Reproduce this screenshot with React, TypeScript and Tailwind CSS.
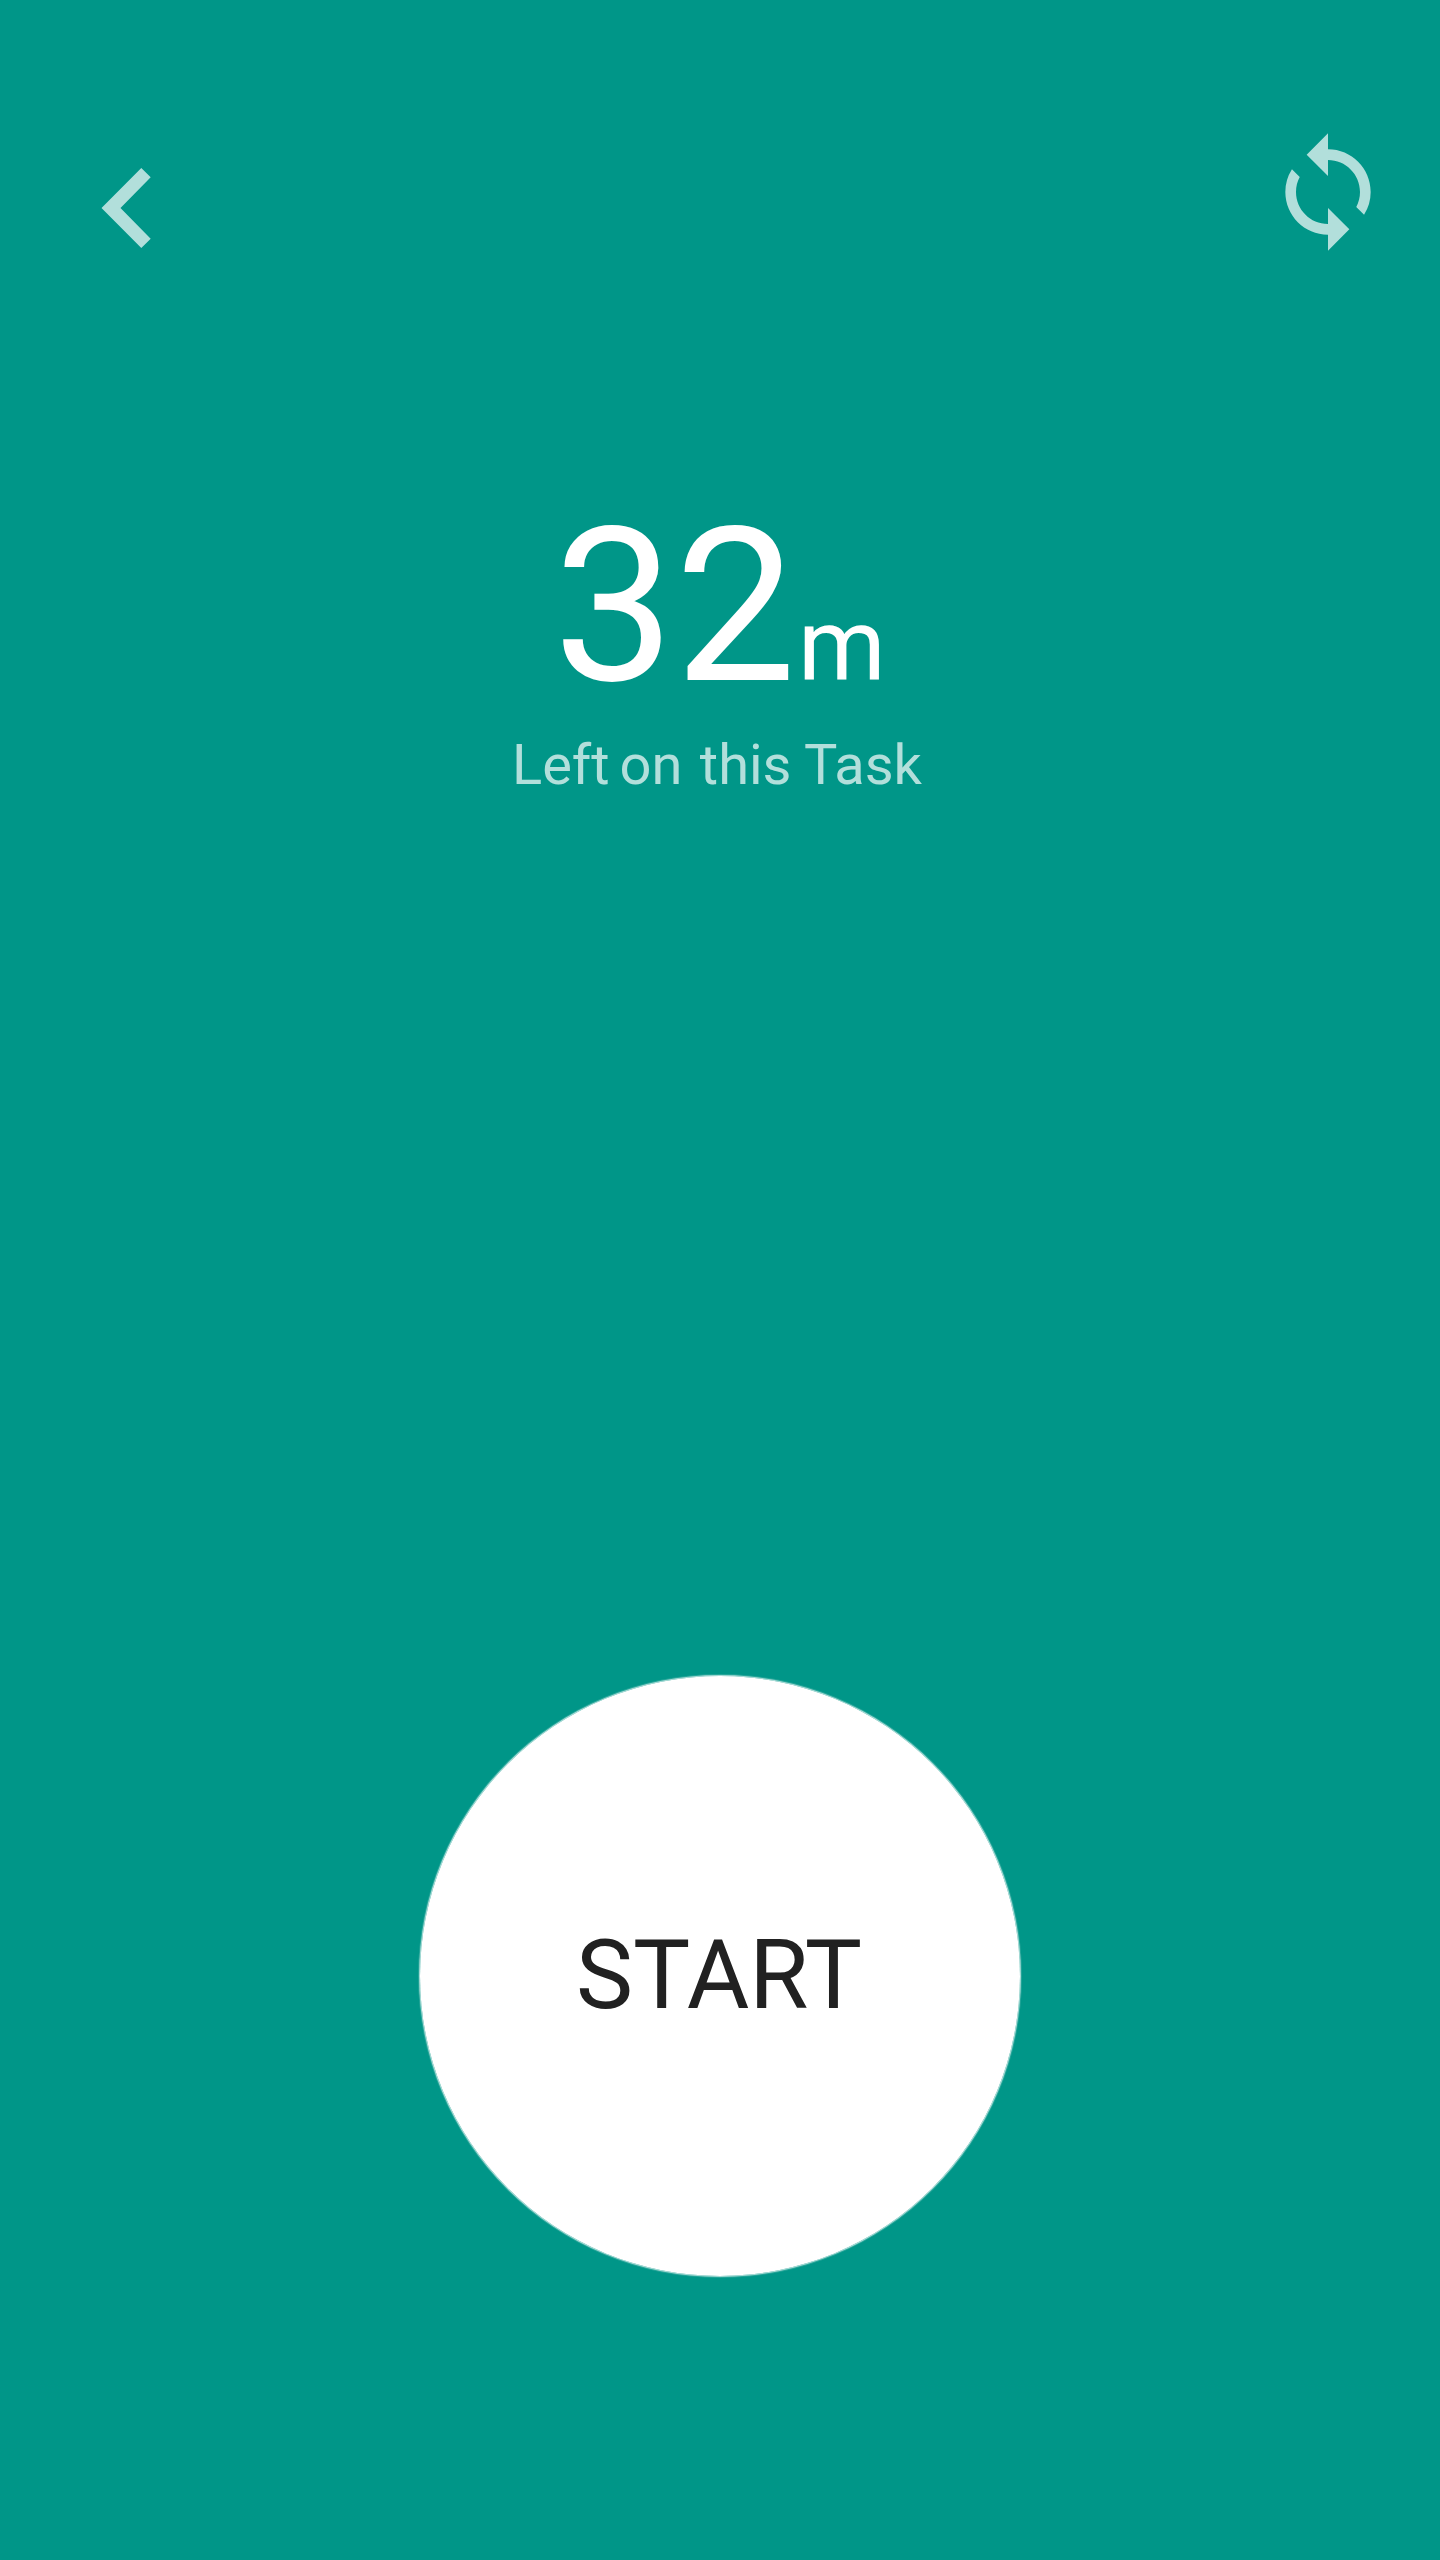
export default function App() {
  return (
    <main className="flex h-[2560px] w-[1440px] flex-col items-center bg-[#009688] font-['Roboto',sans-serif] text-white">
      <header className="flex h-[481px] w-full items-start justify-between pt-[128px] pr-[48px] pl-[92px]">
        <button aria-label="Back" className="pt-8">
          <svg width="68" height="96" viewBox="0 0 68 96" fill="#b2dfdb">
            <path d="M49.3 8 58.7 17.3 28.5 48 58.7 78.7 49.3 88 9.5 48z" />
          </svg>
        </button>
        <button aria-label="Refresh">
          <svg width="128" height="128" viewBox="0 0 24 24" fill="#b2dfdb">
            <path d="M12 4V1L8 5l4 4V6c3.31 0 6 2.69 6 6 0 1.01-.25 1.97-.7 2.8l1.46 1.46A7.93 7.93 0 0 0 20 12c0-4.42-3.58-8-8-8zm0 14c-3.31 0-6-2.69-6-6 0-1.01.25-1.97.7-2.8L5.24 7.74A7.93 7.93 0 0 0 4 12c0 4.42 3.58 8 8 8v3l4-4-4-4v3z" />
          </svg>
        </button>
      </header>
      <section className="flex flex-col items-center">
        <div className="mr-px flex h-[251px] items-baseline leading-[251px]">
          <span className="text-[216px]">32</span>
          <span className="ml-0.5 text-[100px] leading-none">m</span>
        </div>
        <p className="mr-[6px] text-[56px] leading-[66px] whitespace-nowrap text-[#b2dfdb]">
          Left<span className="-ml-[4px]"> on</span>
          <span className="ml-[3.5px]"> this</span>
          <span className="-ml-[0.4px]"> Task</span>
        </p>
      </section>
      <button className="mt-[877px] flex size-[602px] items-center justify-center rounded-full border border-white/60 bg-white bg-clip-padding pr-0.5 pb-0.5 text-[96px] text-[#212121] ring-1 ring-white/15">
        START
      </button>
    </main>
  );
}
